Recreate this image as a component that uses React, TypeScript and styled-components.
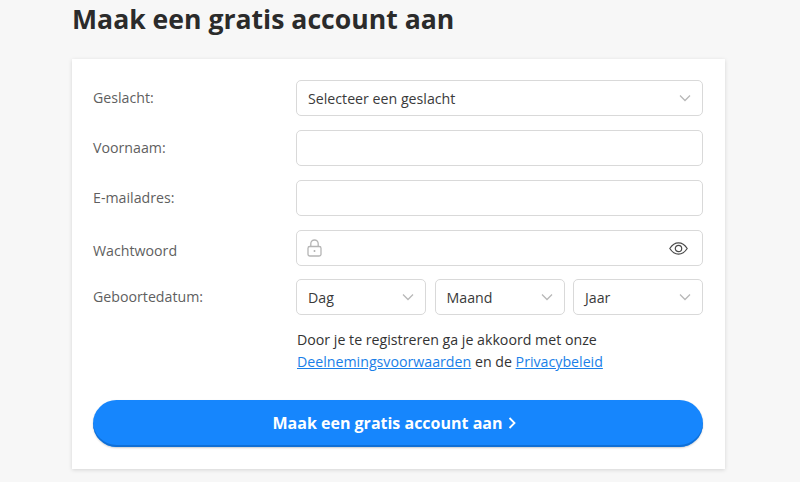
import React from 'react';
import styled, { createGlobalStyle } from 'styled-components';

const GlobalStyle = createGlobalStyle`
  html, body {
    margin:0;
    padding:0;
    height:482px;
    overflow:hidden;
    background:#f7f7f7;
    font-family:"Open Sans", "Liberation Sans", sans-serif;
  }
`

const Page = styled.div`
  width:800px;
  height:482px;
  padding:0 75px 0 72px;
  box-sizing:border-box;
  overflow:hidden;
`

const Title = styled.h1`
  margin:0;
  height:59px;
  font-size:26.6px;
  line-height:38px;
  font-weight:700;
  color:#2b2b2b;
`

const Card = styled.div`
  background:#fff;
  height:410px;
  padding:21px 22px 0 21px;
  box-sizing:border-box;
  box-shadow:0 1px 4px rgba(0,0,0,0.14);
`

const Row = styled.div`
  display:grid;
  grid-template-columns:203px 1fr;
  height:36px;
  margin-bottom:14px;
`

const DateRow = styled(Row)`
  margin-top:-1px;
`

const Label = styled.label<{ $center?: boolean }>`
  font-size:14.2px;
  line-height:20px;
  color:#5f5f5f;
  padding-top:${p => (p.$center ? '11px' : '8px')};
`

const Field = styled.div`
  height:36px;
  box-sizing:border-box;
  border:1px solid #d9d9d9;
  border-radius:5px;
  background:#fff;
  display:flex;
  align-items:center;
  justify-content:space-between;
  padding:0 11px;
  font-size:14.2px;
  color:#3a3a3a;
`

const PasswordField = styled(Field)`
  padding:0 14px 0 10px;
`

const DateFields = styled.div`
  display:grid;
  grid-template-columns:repeat(3, 1fr);
  gap:8.5px;
`

const Terms = styled.p`
  margin:0 0 27px 204px;
  height:44px;
  font-size:14.2px;
  line-height:22px;
  color:#333;
`

const TermsLink = styled.a`
  color:#1a7fe8;
  text-decoration:underline;
`

const SubmitButton = styled.button`
  display:flex;
  align-items:center;
  justify-content:center;
  gap:6px;
  width:100%;
  height:47px;
  padding:0 7px 2px 0;
  border:0;
  border-radius:24px;
  background:#1686fd;
  box-shadow:inset 0 -2px 0 #0f6fd6, 0 1px 2px rgba(0,0,0,0.2);
  color:#fff;
  font-family:inherit;
  font-size:16px;
  font-weight:700;
`

const Chevron = () => (
  <svg width="12" height="8" viewBox="0 0 12 8" fill="none" stroke="#b8b8b8" strokeWidth="1.3">
    <path d="M1 1.5 L6 6.5 L11 1.5" />
  </svg>
)

const LockIcon = () => (
  <svg width="15" height="18" viewBox="0 0 15 18" fill="none" stroke="#b5b5b5" strokeWidth="1.3">
    <path d="M3.8 7.5 V4.8 C3.8 2.6 5.4 1 7.5 1 C9.6 1 11.2 2.6 11.2 4.8 V7.5" />
    <rect x="1" y="7.5" width="13" height="9.5" rx="1.8" />
    <path d="M7.5 11 V13" strokeWidth="1.6" />
  </svg>
)

const Eye = () => (
  <svg width="19" height="13" viewBox="0 0 19 13" fill="none" stroke="#4a4a4a" strokeWidth="1.2">
    <path d="M0.8 6.5 C3.5 2.4 6.3 0.9 9.5 0.9 C12.7 0.9 15.5 2.4 18.2 6.5 C15.5 10.6 12.7 12.1 9.5 12.1 C6.3 12.1 3.5 10.6 0.8 6.5 Z" />
    <circle cx="9.5" cy="6.5" r="3.2" />
  </svg>
)

const ButtonArrow = () => (
  <svg width="8" height="12" viewBox="0 0 8 12" fill="none" stroke="#fff" strokeWidth="1.8">
    <path d="M1.5 1 L6.5 6 L1.5 11" />
  </svg>
)

export default function App() {
  return (
    <Page>
      <GlobalStyle />
      <Title>Maak een gratis account aan</Title>
      <Card>
        <Row>
          <Label>Geslacht:</Label>
          <Field>Selecteer een geslacht<Chevron /></Field>
        </Row>
        <Row>
          <Label>Voornaam:</Label>
          <Field />
        </Row>
        <Row>
          <Label>E-mailadres:</Label>
          <Field />
        </Row>
        <Row>
          <Label $center>Wachtwoord</Label>
          <PasswordField>
            <LockIcon />
            <Eye />
          </PasswordField>
        </Row>
        <DateRow>
          <Label>Geboortedatum:</Label>
          <DateFields>
            <Field>Dag<Chevron /></Field>
            <Field>Maand<Chevron /></Field>
            <Field>Jaar<Chevron /></Field>
          </DateFields>
        </DateRow>
        <Terms>
          Door je te registreren ga je akkoord met onze<br />
          <TermsLink href="#">Deelnemingsvoorwaarden</TermsLink> en de <TermsLink href="#">Privacybeleid</TermsLink>
        </Terms>
        <SubmitButton type="button">Maak een gratis account aan<ButtonArrow /></SubmitButton>
      </Card>
    </Page>
  );
}
